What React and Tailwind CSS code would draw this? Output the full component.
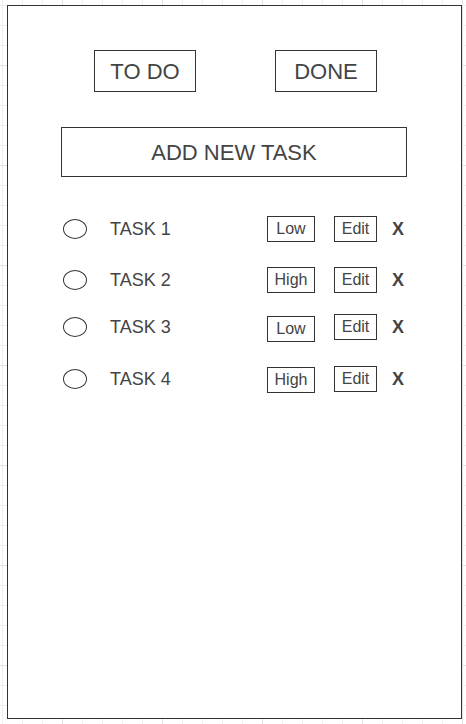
import React from 'react';

const tasks = [
  { name: 'TASK 1', priority: 'Low', mt: 'mt-[39px]', prioShift: '' },
  { name: 'TASK 2', priority: 'High', mt: 'mt-[25px]', prioShift: '' },
  { name: 'TASK 3', priority: 'Low', mt: 'mt-[21px]', prioShift: 'mt-[4px]' },
  { name: 'TASK 4', priority: 'High', mt: 'mt-[26px]', prioShift: 'mt-[2px]' },
];

function TaskRow({ task }) {
  return (
    <div className={`flex items-center h-[26px] ${task.mt}`}>
      <span className="ml-[55px] w-[24px] h-[20px] rounded-[50%] border border-[#333] shrink-0" />
      <span className="ml-[23px] w-[157px] text-[18px] leading-none text-[#444]">{task.name}</span>
      <span className={`w-[48px] h-[26px] border border-[#333] flex items-center justify-center text-[16px] text-[#444] ${task.prioShift}`}>
        {task.priority}
      </span>
      <span className="ml-[19px] w-[43px] h-[26px] border border-[#333] flex items-center justify-center text-[16px] text-[#444]">
        Edit
      </span>
      <span className="ml-[15px] text-[18px] font-bold text-[#444] leading-none">X</span>
    </div>
  );
}

export default function App() {
  return (
    <div className="w-[466px] h-[724px] overflow-hidden bg-white pt-[5px] pl-[7px] font-['Liberation_Sans',Arial,sans-serif] [background-image:linear-gradient(to_right,#e2e2e2_1px,transparent_1px),linear-gradient(to_bottom,#e2e2e2_1px,transparent_1px),linear-gradient(to_right,#efefef_1px,transparent_1px),linear-gradient(to_bottom,#efefef_1px,transparent_1px)] [background-size:100px_100px,100px_100px,20px_20px,20px_20px] [background-position:62px_0,0_65px,2px_0,0_5px]">
      <div className="w-[455px] h-[714px] border border-[#333] bg-white">
        <div className="flex pt-[44px] pl-[86px] gap-[79px]">
          <div className="w-[102px] h-[42px] border border-[#333] flex items-center justify-center text-[22px] text-[#444]">
            TO DO
          </div>
          <div className="w-[102px] h-[42px] border border-[#333] flex items-center justify-center text-[22px] text-[#444]">
            DONE
          </div>
        </div>
        <div className="mt-[35px] ml-[53px] w-[346px] h-[50px] border border-[#333] flex items-center justify-center text-[22px] text-[#444]">
          ADD NEW TASK
        </div>
        {tasks.map((t) => (
          <TaskRow key={t.name} task={t} />
        ))}
      </div>
    </div>
  );
}
